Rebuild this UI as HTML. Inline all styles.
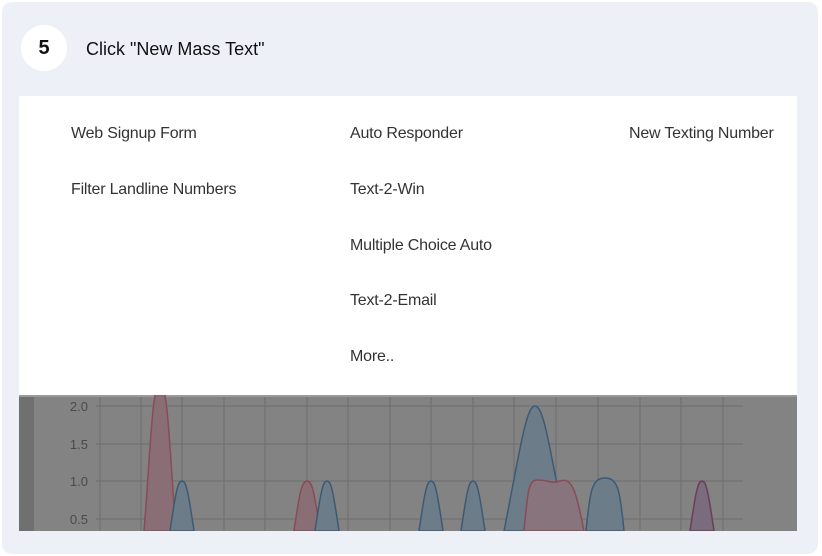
<!DOCTYPE html>
<html><head><meta charset="utf-8"><style>
html,body{margin:0;padding:0;background:#fff;}
body{width:822px;height:556px;position:relative;overflow:hidden;font-family:"Liberation Sans",sans-serif;}
.card{position:absolute;left:2px;top:2px;width:816px;height:552px;background:#eef0f8;border-radius:10px;}
.num{position:absolute;left:21px;top:25px;width:46px;height:46px;border-radius:50%;background:#fff;text-align:center;line-height:46px;font-weight:bold;font-size:20px;color:#111;}
.title{position:absolute;left:86px;top:39px;font-size:18px;color:#111;}
.shot{position:absolute;left:19px;top:96px;width:778px;height:435px;background:#fff;overflow:hidden;}
.m{position:absolute;font-size:16px;color:#333;letter-spacing:-0.2px;}
</style></head><body>
<div class="card"></div>
<div class="num">5</div>
<div class="title">Click "New Mass Text"</div>
<div class="shot">
<div class="m" style="left:52px;top:29px">Web Signup Form</div>
<div class="m" style="left:52px;top:85px">Filter Landline Numbers</div>
<div class="m" style="left:331px;top:29px">Auto Responder</div>
<div class="m" style="left:331px;top:85px">Text-2-Win</div>
<div class="m" style="left:331px;top:141px">Multiple Choice Auto</div>
<div class="m" style="left:331px;top:196px">Text-2-Email</div>
<div class="m" style="left:331px;top:252px">More..</div>
<div class="m" style="left:610px;top:29px">New Texting Number</div>
<svg style="position:absolute;left:0;top:299px" width="778" height="136" viewBox="19 395 778 136">
<rect x="19" y="395" width="778" height="136" fill="#838383"/>
<rect x="19" y="395" width="15" height="136" fill="#707070"/>
<rect x="19" y="395" width="778" height="2" fill="#9a9a9a"/>
<g stroke="#6e6e6e" stroke-width="1">
<line x1="100" y1="397" x2="100" y2="531"/><line x1="141" y1="397" x2="141" y2="531"/><line x1="182" y1="397" x2="182" y2="531"/><line x1="224" y1="397" x2="224" y2="531"/><line x1="265" y1="397" x2="265" y2="531"/><line x1="307" y1="397" x2="307" y2="531"/><line x1="348" y1="397" x2="348" y2="531"/><line x1="390" y1="397" x2="390" y2="531"/><line x1="431" y1="397" x2="431" y2="531"/><line x1="473" y1="397" x2="473" y2="531"/><line x1="514" y1="397" x2="514" y2="531"/><line x1="556" y1="397" x2="556" y2="531"/><line x1="598" y1="397" x2="598" y2="531"/><line x1="640" y1="397" x2="640" y2="531"/><line x1="681" y1="397" x2="681" y2="531"/><line x1="723" y1="397" x2="723" y2="531"/>
<line x1="96" y1="406" x2="743" y2="406"/><line x1="96" y1="444" x2="743" y2="444"/><line x1="96" y1="481" x2="743" y2="481"/><line x1="96" y1="519" x2="743" y2="519"/>
</g>
<g font-size="13" fill="#4a4a4a" font-family="Liberation Sans,sans-serif" text-anchor="end">
<text x="88" y="411">2.0</text><text x="88" y="449">1.5</text><text x="88" y="486">1.0</text><text x="88" y="524">0.5</text>
</g>
<g stroke-width="1.5">
<path d="M144 531 C150 460 152 380 160 385 C168 380 170 460 176 531Z" fill="#8a6e76" stroke="#8a4a58"/>
<path d="M170 531 C176 490 178 481 182 481 C186 481 188 490 194 531Z" fill="#6c7c88" stroke="#3e5a72"/>
<path d="M294 531 C300 490 302 481 307 481 C312 481 314 490 320 531Z" fill="#8a6e76" stroke="#8a4a58"/>
<path d="M315 531 C321 490 323 481 327 481 C331 481 333 490 339 531Z" fill="#6c7c88" stroke="#3e5a72"/>
<path d="M419 531 C425 490 427 481 431 481 C435 481 437 490 443 531Z" fill="#6c7c88" stroke="#3e5a72"/>
<path d="M461 531 C467 490 469 481 473 481 C477 481 479 490 485 531Z" fill="#6c7c88" stroke="#3e5a72"/>
<path d="M504 531 C520 450 526 406 535 406 C544 406 550 450 566 531Z" fill="#6c7c88" stroke="#3e5a72"/>
<path d="M524 531 C528 490 528 480 538 480 C548 480 552 484 560 481 C572 477 576 490 584 531Z" fill="#88747c" stroke="#8a4a58"/>
<path d="M586 531 C590 490 592 478 605 478 C618 478 620 490 624 531Z" fill="#6c7c88" stroke="#3e5a72"/>
<path d="M690 531 C696 490 698 481 702 481 C706 481 708 490 714 531Z" fill="#7a6c7c" stroke="#6a3e58"/>
</g>
</svg>
</div>
</body></html>
